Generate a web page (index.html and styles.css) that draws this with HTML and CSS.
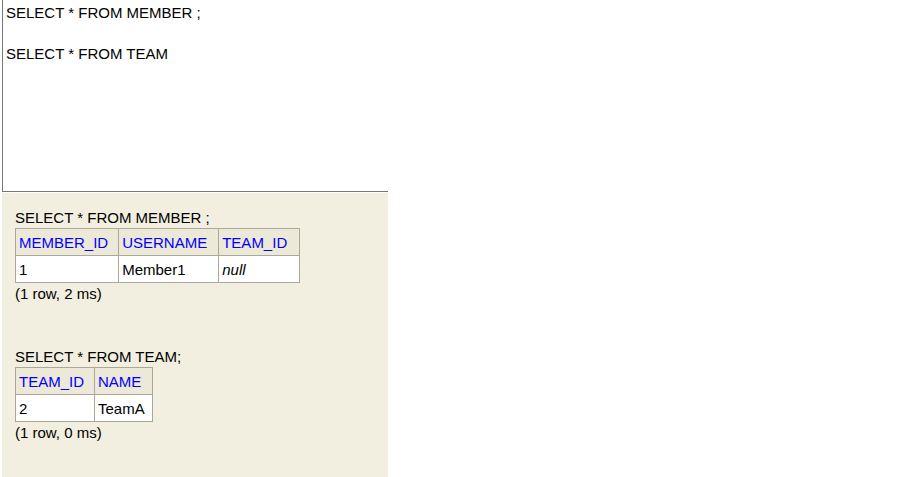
FILE: index.html
```html
<!DOCTYPE html>
<html>
<head>
<meta charset="utf-8">
<link rel="stylesheet" href="styles.css">
</head>
<body>
<div class="page">
  <div class="editor">
    <div class="line">SELECT * FROM MEMBER ;</div>
    <div class="line">&nbsp;</div>
    <div class="line">SELECT * FROM TEAM</div>
  </div>
  <div class="results">
    <div class="section">
      <div class="query">SELECT * FROM MEMBER ;</div>
      <table class="result-set">
        <tr><th>MEMBER_ID</th><th class="plus1">USERNAME</th><th class="plus2">TEAM_ID</th></tr>
        <tr><td>1</td><td class="plus1">Member1</td><td class="plus2"><i>null</i></td></tr>
      </table>
      <div class="stats">(1 row, 2 ms)</div>
    </div>
    <div class="section">
      <div class="query">SELECT * FROM TEAM;</div>
      <table class="result-set">
        <tr><th>TEAM_ID</th><th class="tight">NAME</th></tr>
        <tr><td>2</td><td class="tight">TeamA</td></tr>
      </table>
      <div class="stats">(1 row, 0 ms)</div>
    </div>
  </div>
</div>
</body>
</html>
```
FILE: styles.css
```css
html, body {
  margin: 0;
  padding: 0;
  background: #ffffff;
}
body {
  font-family: "Liberation Sans", Arial, sans-serif;
  font-size: 15px;
  color: #000000;
}
.page {
  margin-left: 2px;
  width: 386px;
  height: 477px;
  display: flex;
  flex-direction: column;
}
.editor {
  flex-shrink: 0;
  height: 188px;
  padding: 3px 0 0 3px;
  border-left: 1px solid #767676;
  border-bottom: 1px solid #767676;
  line-height: 20.5px;
  white-space: nowrap;
}
.results {
  margin-top: 1px;
  flex: 1;
  background: #f2efe0;
  padding: 16px 0 0 13px;
}
.section {
  margin-bottom: 46px;
}
.query {
  line-height: 17px;
}
.result-set {
  margin-top: 2px;
  border-collapse: collapse;
  border: 1px solid #aca899;
  background: #ffffff;
}
.result-set th,
.result-set td {
  padding: 5px 10px 4px 3px;
  line-height: 17px;
  text-align: left;
  border: 1px solid #aca899;
  font-size: 15px;
  white-space: nowrap;
}
.result-set .plus1 {
  padding-right: 11px;
}
.result-set .plus2 {
  padding-right: 12px;
}
.result-set .tight {
  padding-right: 7px;
}
.result-set th {
  background: #ece9d8;
  font-weight: normal;
  color: #0000ff;
}
.result-set td {
  background: #ffffff;
}
.stats {
  padding-top: 2px;
  line-height: 17px;
}
```
